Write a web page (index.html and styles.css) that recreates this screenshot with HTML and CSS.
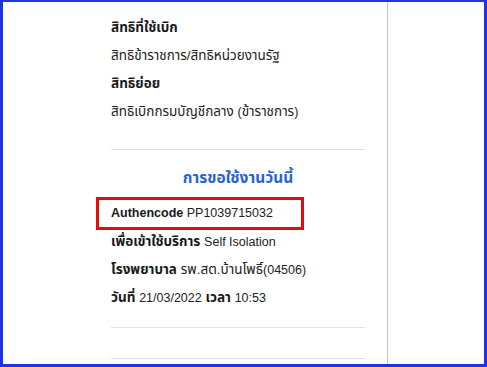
FILE: index.html
```html
<!DOCTYPE html>
<html lang="th">
<head>
    <meta charset="UTF-8">
    <meta name="viewport" content="width=device-width, initial-scale=1.0">
    <title>การขอใช้งานวันนี้</title>
    <link rel="stylesheet" href="styles.css">
</head>
<body>
    <div class="frame">
        <div class="main">
            <div class="content">
                <div class="row label">สิทธิที่ใช้เบิก</div>
                <div class="row">สิทธิข้าราชการ/สิทธิหน่วยงานรัฐ</div>
                <div class="row label">สิทธิย่อย</div>
                <div class="row">สิทธิเบิกกรมบัญชีกลาง <span class="en">(</span>ข้าราชการ<span class="en">)</span></div>

                <div class="divider"></div>

                <div class="title">การขอใช้งานวันนี้</div>
                <div class="highlight en">
                    <b>Authencode</b> PP1039715032
                </div>
                <div class="row after-box"><b>เพื่อเข้าใช้บริการ</b> <span class="en">Self Isolation</span></div>
                <div class="row"><b>โรงพยาบาล</b> รพ.สต.บ้านโพธิ์<span class="en">(04506)</span></div>
                <div class="row"><b>วันที่</b> <span class="en">21/03/2022</span> <b>เวลา</b> <span class="en">10:53</span></div>

                <div class="divider bottom"></div>
                <div class="divider last"></div>
            </div>
        </div>
        <div class="side"></div>
    </div>
</body>
</html>
```

FILE: styles.css
```css
body {
    margin: 0;
    font-family: "Liberation Sans", "Noto Sans Thai", "Noto Sans", sans-serif;
    font-size: 13.5px;
    color: #222;
    background: #fff;
}

.en {
    font-size: 12.5px;
}

.frame {
    display: flex;
    height: 367px;
    box-sizing: border-box;
    border: 3px solid #1f33e6;
    border-top-width: 2px;
}

.main {
    width: 384px;
}

.side {
    flex: 1;
    border-left: 1px solid #c4c4c4;
}

.content {
    margin-left: 108px;
    width: 254px;
    padding-top: 12px;
}

.row {
    line-height: 28px;
    height: 28px;
    white-space: nowrap;
}

.label {
    font-weight: bold;
    color: #1a1a1a;
}

.row b,
.highlight b {
    color: #1a1a1a;
}

.divider {
    height: 1px;
    background: #e4e4e4;
    margin-top: 23px;
}

.title {
    margin-top: 14px;
    line-height: 28px;
    text-align: center;
    font-size: 15.5px;
    font-weight: bold;
    color: #2763d2;
}

.highlight {
    margin-top: 5px;
    margin-left: -15px;
    width: 190px;
    height: 27px;
    line-height: 27px;
    padding-left: 12px;
    border: 3px solid #e40b0b;
    white-space: nowrap;
}

.after-box {
    margin-top: -2px;
}

.divider.bottom {
    margin-top: 15px;
}

.divider.last {
    margin-top: 30px;
}
```
